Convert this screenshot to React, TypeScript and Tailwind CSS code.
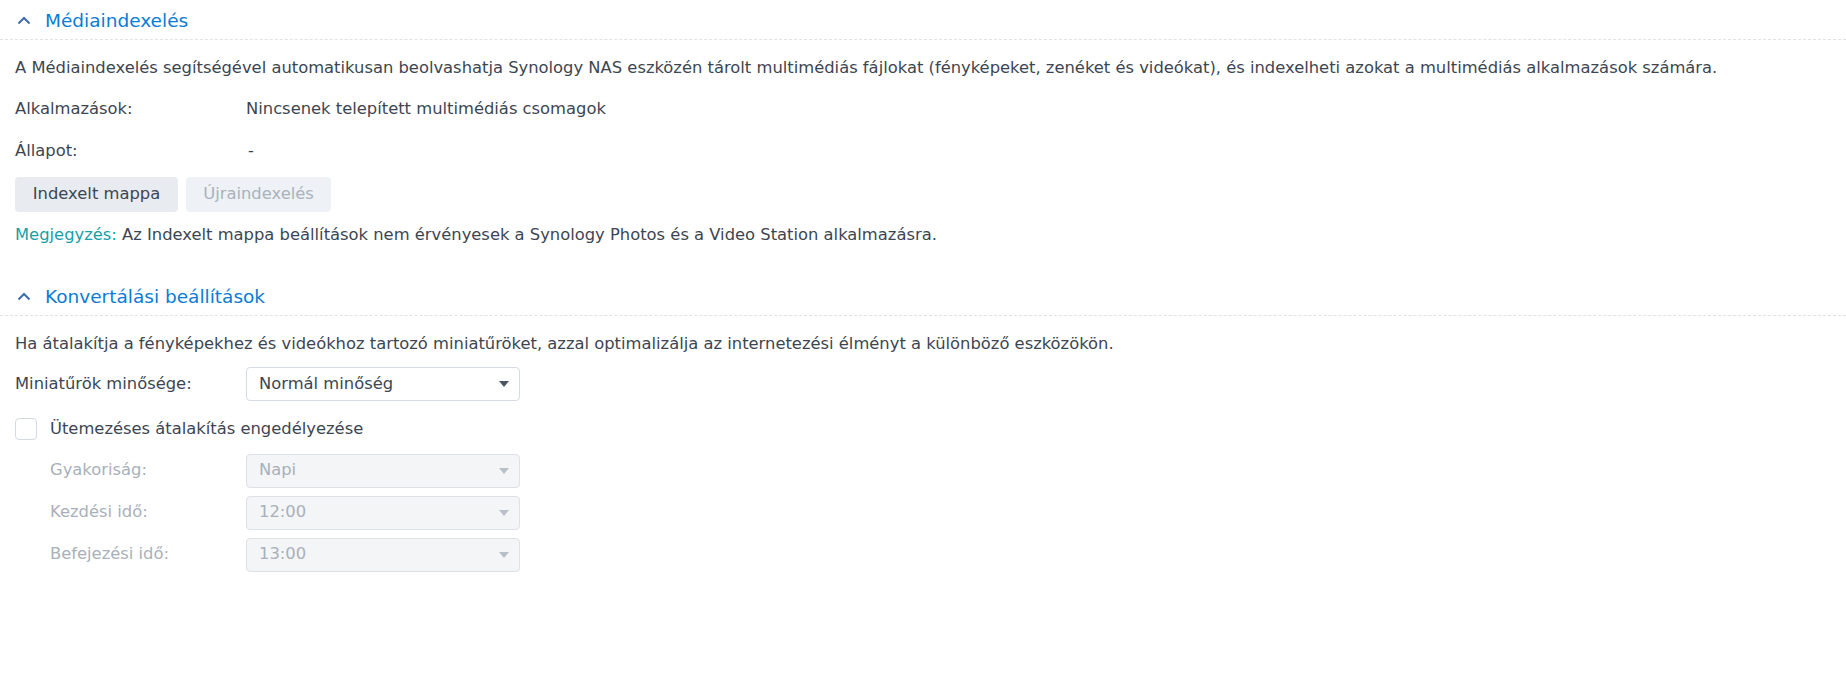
import React from "react";

const font = { fontFamily: '"DejaVu Sans", Verdana, sans-serif' };

function Caret() {
  return (
    <svg width="14" height="9" viewBox="0 0 14 9" className="shrink-0">
      <polyline points="1.5,7.5 7,2 12.5,7.5" fill="none" stroke="#3f6cb0" strokeWidth="2" />
    </svg>
  );
}

function SectionHeader({ title }: { title: string }) {
  return (
    <div className="flex h-[40px] items-center gap-[14px] border-b border-dashed border-[#dfe3e8] pl-[17px] pt-[2px]">
      <Caret />
      <span className="text-[18.5px] text-[#0a7cd6]">{title}</span>
    </div>
  );
}

function Arrow({ disabled }: { disabled?: boolean }) {
  return (
    <svg width="10" height="6" viewBox="0 0 10 6" className="mr-[6px]">
      <polygon points="0,0 10,0 5,6" fill={disabled ? "#b9bfc7" : "#4a5563"} />
    </svg>
  );
}

function Select({ value, disabled }: { value: string; disabled?: boolean }) {
  return (
    <div
      className={`flex h-[34px] w-[274px] items-center justify-between rounded-[4px] border pl-[12px] pr-[4px] ${
        disabled ? "border-[#dde1e6] bg-[#f4f5f7] text-[#a9b0b9]" : "border-[#d7dce2] bg-white text-[#3c4652]"
      }`}
    >
      <span>{value}</span>
      <Arrow disabled={disabled} />
    </div>
  );
}

export default function App() {
  return (
    <div className="min-h-[695px] w-[1846px] bg-white text-[16.35px] text-[#3c4652]" style={font}>
      {/* ── Médiaindexelés ─────────────────────────────── */}
      <SectionHeader title="Médiaindexelés" />
      <div className="px-[15px]">
        <p className="mt-[18px] leading-[20px]">
          A Médiaindexelés segítségével automatikusan beolvashatja Synology NAS eszközén tárolt multimédiás fájlokat
          (fényképeket, zenéket és videókat), és indexelheti azokat a multimédiás alkalmazások számára.
        </p>
        <div className="mt-[21px] flex leading-[20px]">
          <span className="w-[231px]">Alkalmazások:</span>
          <span>Nincsenek telepített multimédiás csomagok</span>
        </div>
        <div className="mt-[22px] flex leading-[20px]">
          <span className="w-[233px]">Állapot:</span>
          <span>-</span>
        </div>
        <div className="mt-[16px] flex gap-[8px]">
          <button className="h-[35px] w-[163px] rounded-[4px] bg-[#e8ecf1] text-[#3c4652]">Indexelt mappa</button>
          <button className="h-[35px] w-[145px] rounded-[4px] bg-[#eef1f5] text-[#a9b1bc]">Újraindexelés</button>
        </div>
        <p className="mt-[13px] leading-[20px]">
          <span className="text-[#17a0a6]">Megjegyzés:</span> Az Indexelt mappa beállítások nem érvényesek a Synology
          Photos és a Video Station alkalmazásra.
        </p>
      </div>

      {/* ── Konvertálási beállítások ───────────────────── */}
      <div className="mt-[31px]">
        <SectionHeader title="Konvertálási beállítások" />
      </div>
      <div className="px-[15px]">
        <p className="mt-[18px] leading-[20px]">
          Ha átalakítja a fényképekhez és videókhoz tartozó miniatűröket, azzal optimalizálja az internetezési élményt a
          különböző eszközökön.
        </p>
        <div className="mt-[13px] flex items-center">
          <span className="w-[231px]">Miniatűrök minősége:</span>
          <Select value="Normál minőség" />
        </div>
        <div className="mt-[16px] flex items-center gap-[13px]">
          <span className="h-[22px] w-[22px] rounded-[4px] border border-[#d5dae0] bg-white" />
          <span>Ütemezéses átalakítás engedélyezése</span>
        </div>
        <div className="mt-[12px] flex flex-col gap-[8px] pl-[35px]">
          <div className="flex items-center">
            <span className="w-[196px] text-[#a9b0b9]">Gyakoriság:</span>
            <Select value="Napi" disabled />
          </div>
          <div className="flex items-center">
            <span className="w-[196px] text-[#a9b0b9]">Kezdési idő:</span>
            <Select value="12:00" disabled />
          </div>
          <div className="flex items-center">
            <span className="w-[196px] text-[#a9b0b9]">Befejezési idő:</span>
            <Select value="13:00" disabled />
          </div>
        </div>
      </div>
    </div>
  );
}
